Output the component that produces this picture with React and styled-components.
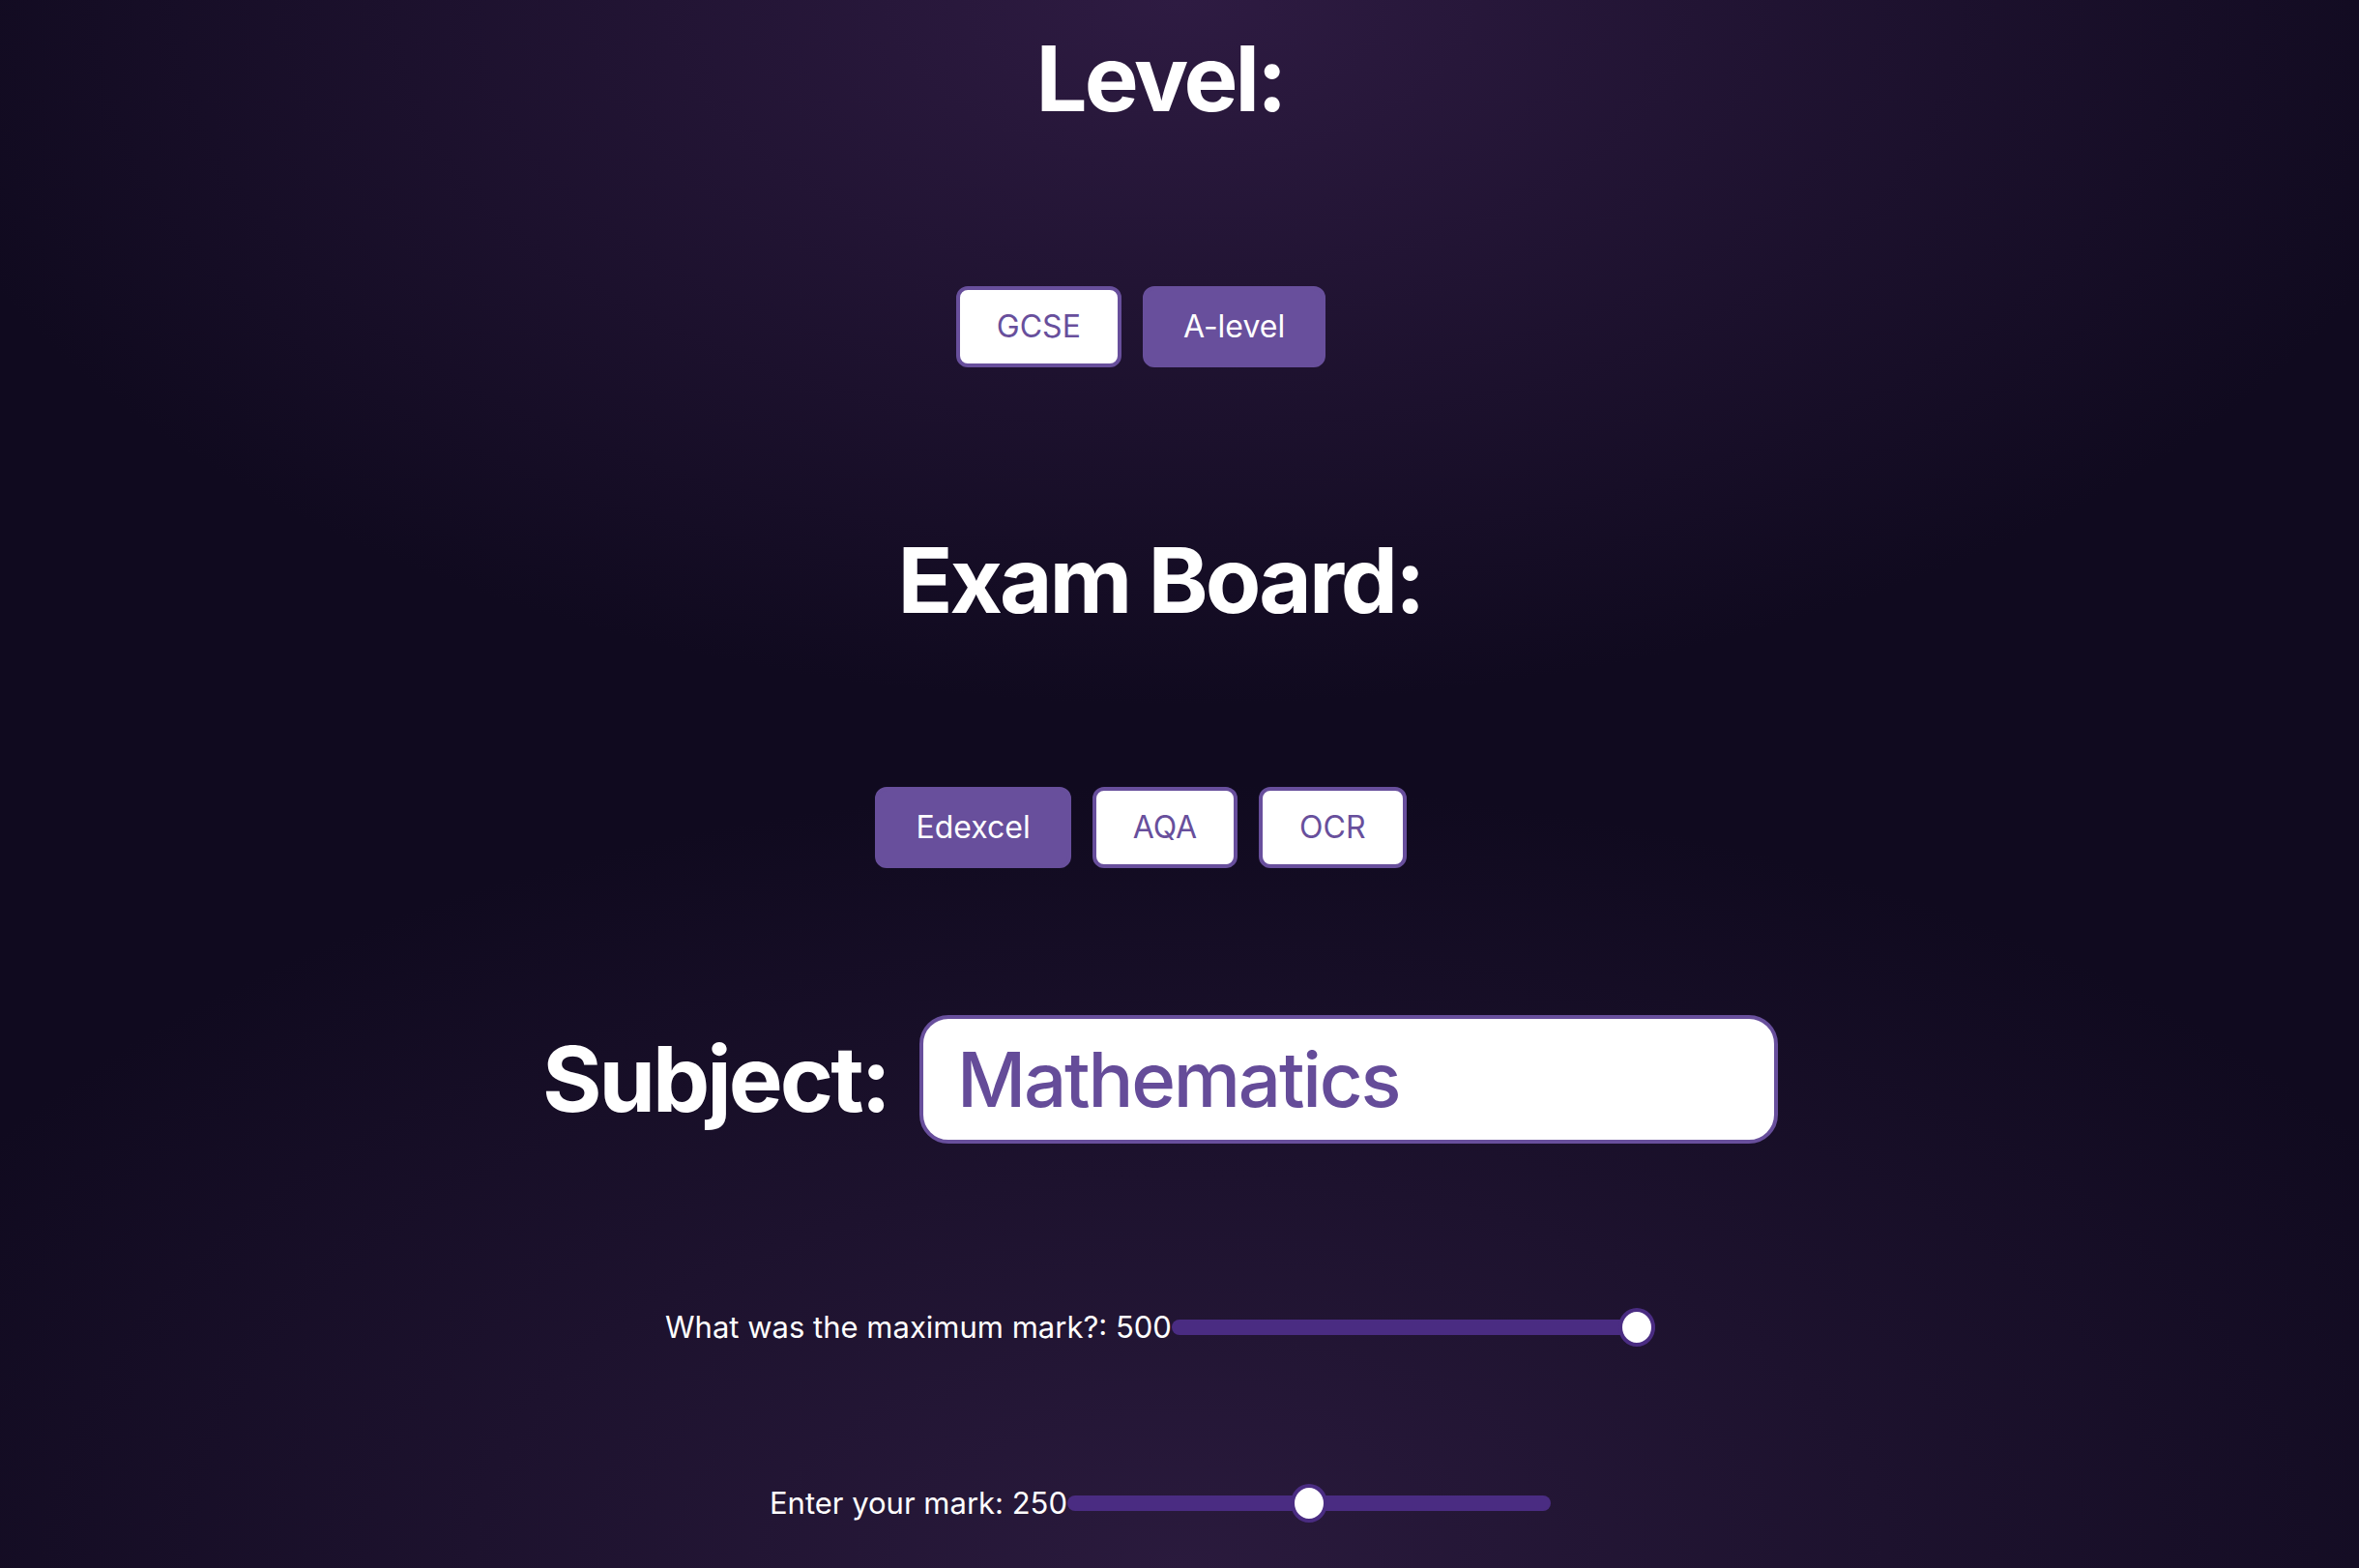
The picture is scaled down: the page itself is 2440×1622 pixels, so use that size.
import React, { useState } from 'react';
import styled, { createGlobalStyle } from 'styled-components';

const GlobalStyle = createGlobalStyle`
  html, body {
    margin: 0;
    padding: 0;
    min-height: 100%;
  }
  body {
    min-height: 100vh;
    font-family: Inter, "Noto Sans", "Liberation Sans", sans-serif;
    color: #fff;
    background:
      radial-gradient(ellipse 55% 45% at 50% 0%, #2e1b42 0%, rgba(46, 27, 66, 0) 100%),
      radial-gradient(ellipse 60% 50% at 50% 100%, #2a1a3d 0%, rgba(42, 26, 61, 0) 100%),
      #100a1f;
  }
`;

const Page = styled.div`
  display: flex;
  flex-direction: column;
  align-items: center;
  min-height: 100vh;
  padding: 25px 40px 0 0;
  box-sizing: border-box;
`;

const Heading = styled.h1`
  margin: ${(props) => props.top || 0}px 0 0 0;
  font-size: 94px;
  line-height: 1.2;
  font-weight: 700;
  letter-spacing: -3px;
  color: #fff;
`;

const ButtonRow = styled.div`
  display: flex;
  gap: 22px;
  margin-top: ${(props) => props.top}px;
  margin-right: 40px;
`;

const Choice = styled.button`
  font-family: inherit;
  font-size: 32px;
  line-height: 1.2;
  font-weight: 400;
  padding: 19px 38px;
  border: 4px solid #684f9c;
  border-radius: 12px;
  cursor: pointer;
  background: ${(props) => (props.active ? '#684f9c' : '#fff')};
  color: ${(props) => (props.active ? '#fff' : '#684f9c')};
`;

const SubjectRow = styled.div`
  display: flex;
  align-items: center;
  gap: 32px;
  margin-top: 152px;
`;

const SubjectLabel = styled.label`
  font-size: 94px;
  line-height: 1.2;
  font-weight: 700;
  letter-spacing: -3px;
`;

const SubjectInput = styled.input`
  width: 888px;
  height: 133px;
  box-sizing: border-box;
  border: 4px solid #684f9c;
  border-radius: 30px;
  background: #fff;
  padding: 0 35px;
  font-family: inherit;
  font-size: 78px;
  font-weight: 500;
  letter-spacing: -2.2px;
  color: #654c99;
  outline: none;
`;

const SliderRow = styled.div`
  display: flex;
  align-items: center;
  height: 40px;
  margin-top: ${(props) => props.top}px;
`;

const SliderLabel = styled.label`
  font-size: 31px;
  line-height: 40px;
  color: #fff;
  white-space: nowrap;
`;

const Range = styled.input`
  -webkit-appearance: none;
  appearance: none;
  width: 500px;
  height: 16px;
  margin: 0;
  border-radius: 8px;
  background: #4a2c82;
  outline: none;

  &::-webkit-slider-thumb {
    -webkit-appearance: none;
    appearance: none;
    width: 38px;
    height: 40px;
    border-radius: 50%;
    background: #fff;
    border: 4px solid #4a2c82;
    box-sizing: border-box;
    cursor: pointer;
  }
  &::-moz-range-thumb {
    width: 38px;
    height: 40px;
    border-radius: 50%;
    background: #fff;
    border: 4px solid #4a2c82;
    box-sizing: border-box;
  }
`;

export default function App() {
  const [level, setLevel] = useState('A-level');
  const [board, setBoard] = useState('Edexcel');
  const [subject, setSubject] = useState('Mathematics');
  const [maxMark, setMaxMark] = useState(500);
  const [mark, setMark] = useState(250);

  return (
    <>
      <GlobalStyle />
      <Page>
        <Heading>Level:</Heading>
        <ButtonRow top={158}>
          {['GCSE', 'A-level'].map((l) => (
            <Choice key={l} active={level === l} onClick={() => setLevel(l)}>
              {l}
            </Choice>
          ))}
        </ButtonRow>

        <Heading top={164}>Exam Board:</Heading>
        <ButtonRow top={157}>
          {['Edexcel', 'AQA', 'OCR'].map((b) => (
            <Choice key={b} active={board === b} onClick={() => setBoard(b)}>
              {b}
            </Choice>
          ))}
        </ButtonRow>

        <SubjectRow>
          <SubjectLabel>Subject:</SubjectLabel>
          <SubjectInput value={subject} onChange={(e) => setSubject(e.target.value)} />
        </SubjectRow>

        <SliderRow top={170}>
          <SliderLabel>What was the maximum mark?: {maxMark}</SliderLabel>
          <Range
            type="range"
            min={0}
            max={500}
            value={maxMark}
            onChange={(e) => setMaxMark(Number(e.target.value))}
          />
        </SliderRow>

        <SliderRow top={142}>
          <SliderLabel>Enter your mark: {mark}</SliderLabel>
          <Range
            type="range"
            min={0}
            max={maxMark}
            value={mark}
            onChange={(e) => setMark(Number(e.target.value))}
          />
        </SliderRow>
      </Page>
    </>
  );
}
